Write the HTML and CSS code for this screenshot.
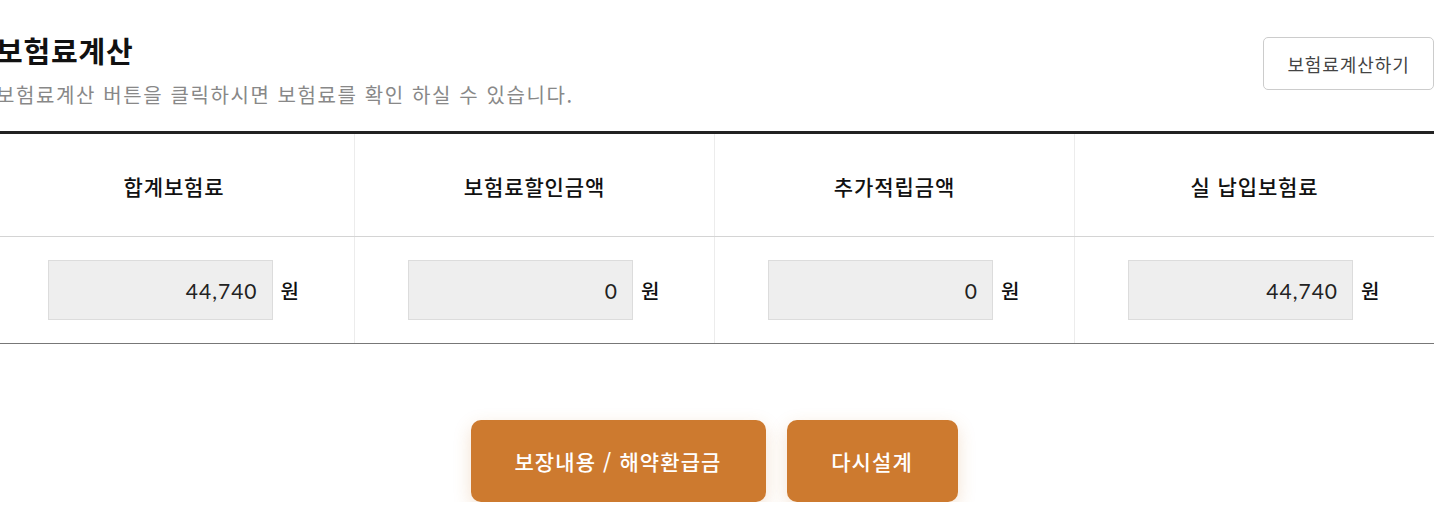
FILE: index.html
```html
<!DOCTYPE html>
<html lang="ko">
<head>
<meta charset="utf-8">
<title>보험료계산</title>
<link rel="stylesheet" href="styles.css">
</head>
<body>
<div class="wrap">
  <div class="head">
    <div class="head-text">
      <h2 class="title">보험료계산</h2>
      <p class="desc">보험료계산 버튼을 클릭하시면 보험료를 확인 하실 수 있습니다.</p>
    </div>
    <button class="calc-btn" type="button">보험료계산하기</button>
  </div>
  <div class="table">
    <div class="row row-head">
      <div class="cell">합계보험료</div>
      <div class="cell">보험료할인금액</div>
      <div class="cell">추가적립금액</div>
      <div class="cell">실 납입보험료</div>
    </div>
    <div class="row row-body">
      <div class="cell"><span class="amount">44,740</span><span class="unit">원</span></div>
      <div class="cell"><span class="amount">0</span><span class="unit">원</span></div>
      <div class="cell"><span class="amount">0</span><span class="unit">원</span></div>
      <div class="cell"><span class="amount">44,740</span><span class="unit">원</span></div>
    </div>
  </div>
  <div class="actions">
    <button class="act-btn act-wide" type="button">보장내용 / 해약환급금</button>
    <button class="act-btn act-narrow" type="button">다시설계</button>
  </div>
</div>
</body>
</html>
```
FILE: styles.css
```css
* { box-sizing: border-box; }
html, body { margin: 0; padding: 0; background: #fff; overflow: hidden; }
body {
  font-family: "Noto Sans CJK KR", "Noto Sans", sans-serif;
  color: #111;
}
.wrap {
  width: 1440px;
  margin-left: -6px;
  padding-top: 31px;
}
.head {
  display: flex;
  justify-content: space-between;
  align-items: flex-start;
  padding-left: 2px;
}
.title {
  margin: 0;
  font-size: 29px;
  line-height: 38px;
  font-weight: 700;
  color: #111;
  letter-spacing: 0.8px;
}
.desc {
  margin: 13px 0 0;
  font-size: 20px;
  line-height: 26px;
  color: #888;
  font-weight: 400;
  letter-spacing: 1.6px;
}
.calc-btn {
  margin-top: 6px;
  margin-right: 0;
  width: 171px;
  height: 53px;
  border: 1px solid #ccc;
  border-radius: 5px;
  background: #fff;
  font-family: inherit;
  font-size: 18px;
  letter-spacing: 0.9px;
  color: #444;
  padding: 0;
}
.table {
  margin-top: 23px;
  width: 1440px;
  border-top: 3px solid #222;
  border-bottom: 1px solid #777;
}
.row {
  display: grid;
  grid-template-columns: repeat(4, 1fr);
}
.row-head {
  height: 103px;
  border-bottom: 1px solid #d4d4d4;
}
.row-body {
  height: 106px;
}
.cell {
  display: flex;
  align-items: center;
  justify-content: center;
  border-left: 1px solid #ececec;
}
.cell:first-child { border-left: none; }
.row-head .cell {
  font-size: 21px;
  font-weight: 500;
  letter-spacing: 0.9px;
  color: #111;
  padding-top: 2px;
}
.amount {
  width: 225px;
  height: 60px;
  background: #eeeeee;
  border: 1px solid #dcdcdc;
  display: flex;
  align-items: center;
  justify-content: flex-end;
  padding-right: 14px;
  font-family: "Lato", "Noto Sans", sans-serif;
  font-size: 21px;
  letter-spacing: 1px;
  color: #222;
}
.unit {
  margin-left: 8px;
  font-size: 20px;
  font-weight: 500;
  color: #111;
  width: 20px;
}
.actions {
  display: flex;
  justify-content: center;
  gap: 21px;
  margin-top: 76px;
}
.act-btn {
  height: 82px;
  border: none;
  border-radius: 10px;
  background: #cd7a2f;
  color: #fff;
  font-family: inherit;
  font-size: 21px;
  font-weight: 500;
  letter-spacing: 1.1px;
  box-shadow: 0 6px 18px rgba(205, 122, 47, 0.22);
  padding: 0;
}
.act-wide { width: 295px; }
.act-narrow { width: 171px; }
```
